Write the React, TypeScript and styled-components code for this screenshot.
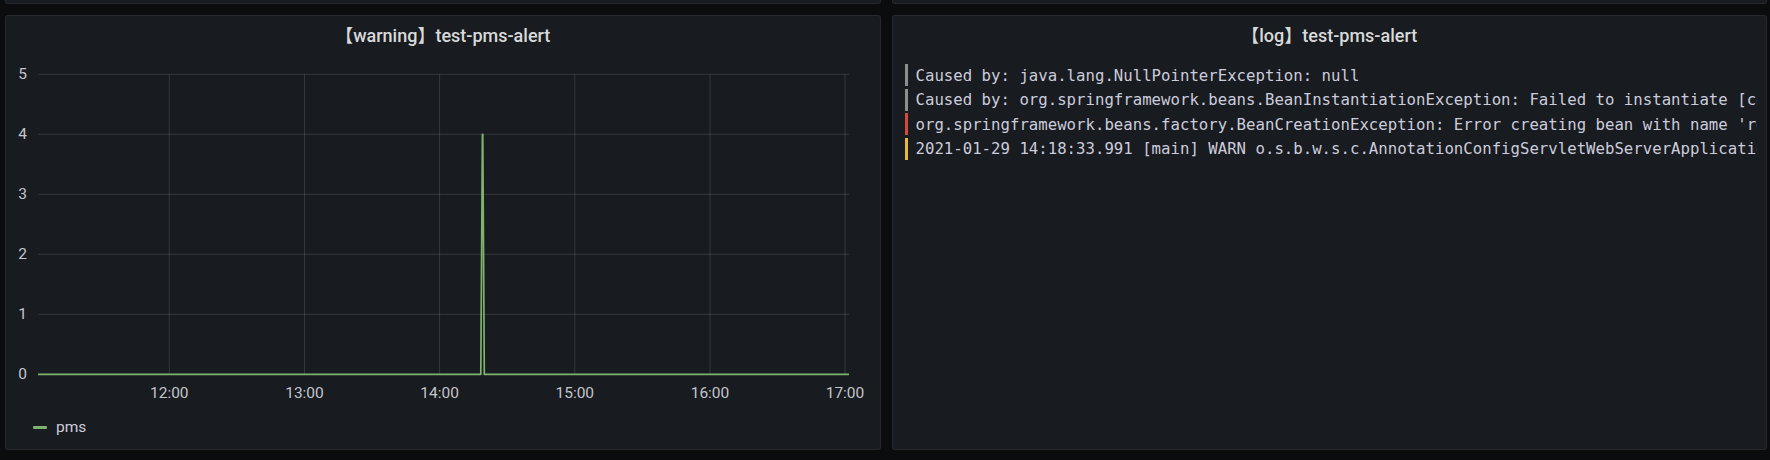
import React from "react";
import styled, { createGlobalStyle } from "styled-components";

const GlobalStyle = createGlobalStyle`
  html, body {
    margin: 0;
    padding: 0;
    background: #0b0c0e;
  }
  body {
    font-family: "Roboto", "Noto Sans CJK SC", sans-serif;
    color: #ccccdc;
  }
`;

const Page = styled.div`
  width: 1770px;
  height: 460px;
  box-sizing: border-box;
  padding: 0 3px 0 5px;
  background: #0b0c0e;
  display: flex;
  flex-direction: column;
  gap: 11px;
  overflow: hidden;
`;

const Row = styled.div`
  display: grid;
  grid-template-columns: 1fr 1fr;
  gap: 11px;
`;

const Stub = styled.div`
  height: 3px;
  background: #181b1f;
  border: 1px solid rgba(204, 204, 220, 0.07);
  border-top: none;
  border-radius: 0 0 3px 3px;
`;

const Panel = styled.section`
  height: 435px;
  box-sizing: border-box;
  background: #181b1f;
  border: 1px solid rgba(204, 204, 220, 0.08);
  border-radius: 3px;
  display: flex;
  flex-direction: column;
  overflow: hidden;
`;

const PanelHeader = styled.header`
  height: 36px;
  flex: none;
  display: flex;
  align-items: center;
  justify-content: center;
  margin-bottom: 4px;
`;

const PanelTitle = styled.h2`
  margin: 0;
  font-family: "Roboto", "Noto Sans CJK SC", sans-serif;
  font-size: 18px;
  font-weight: 500;
  color: #d8d9da;
  white-space: nowrap;
`;

const ChartBody = styled.div`
  height: 350px;
  flex: none;
  margin-top: 1px;
`;

const Legend = styled.div`
  height: 40px;
  display: flex;
  align-items: center;
  gap: 9px;
  padding-left: 27px;
`;

const LegendLine = styled.span<{ $color: string }>`
  width: 14px;
  height: 3px;
  border-radius: 1px;
  background: ${(p) => p.$color};
`;

const LegendLabel = styled.span`
  font-family: "Roboto", sans-serif;
  font-size: 15.5px;
  color: #ccccdc;
`;

const LogList = styled.div`
  padding: 7px 9px 0 12px;
  overflow: hidden;
  display: flex;
  flex-direction: column;
`;

const LogRow = styled.div`
  height: 24.5px;
  display: flex;
  align-items: center;
  gap: 8px;
  min-width: 0;
`;

const LogLevel = styled.span<{ $color: string }>`
  flex: none;
  width: 3px;
  height: 22px;
  background: ${(p) => p.$color};
`;

const LogText = styled.span`
  font-family: "DejaVu Sans Mono", "Liberation Mono", monospace;
  font-size: 15.7px;
  color: #ccccdc;
  white-space: pre;
  overflow: hidden;
  flex: 1;
  min-width: 0;
`;

const GREEN = "#7eb26d";
const GRID = "rgba(240, 250, 255, 0.13)";
const AXIS = "#c4c5cb";

const yTicks = [0, 1, 2, 3, 4, 5];
const xTicks = [
  { label: "12:00", x: 163.3 },
  { label: "13:00", x: 298.5 },
  { label: "14:00", x: 433.6 },
  { label: "15:00", x: 568.8 },
  { label: "16:00", x: 704 },
  { label: "17:00", x: 839 },
];
const X0 = 32;
const X1 = 843;
const yOf = (v: number) => 317.3 - v * 60;

function TimeSeries() {
  return (
    <svg width="874" height="350" viewBox="0 0 874 350">
      {yTicks.map((v) => (
        <g key={v}>
          <line x1={X0} x2={X1} y1={yOf(v)} y2={yOf(v)} stroke={GRID} strokeWidth={1} />
          <text
            x={21}
            y={yOf(v)}
            textAnchor="end"
            dominantBaseline="central"
            fill={AXIS}
            fontFamily="Roboto, sans-serif"
            fontSize="15.5"
          >
            {v}
          </text>
        </g>
      ))}
      {xTicks.map((t) => (
        <g key={t.label}>
          <line x1={t.x} x2={t.x} y1={yOf(5)} y2={yOf(0)} stroke={GRID} strokeWidth={1} />
          <text
            x={t.x}
            y={336}
            textAnchor="middle"
            dominantBaseline="central"
            fill={AXIS}
            fontFamily="Roboto, sans-serif"
            fontSize="15.5"
          >
            {t.label}
          </text>
        </g>
      ))}
      <polyline
        fill="none"
        stroke={GREEN}
        strokeWidth={1.7}
        strokeLinejoin="round"
        points={`${X0},${yOf(0)} 474.8,${yOf(0)} 476.4,${yOf(4)} 476.8,${yOf(4)} 478.3,${yOf(0)} ${X1},${yOf(0)}`}
      />
    </svg>
  );
}

const logs = [
  { level: "#8e8e8e", text: "Caused by: java.lang.NullPointerException: null" },
  {
    level: "#8e8e8e",
    text: "Caused by: org.springframework.beans.BeanInstantiationException: Failed to instantiate [com.example.pms.config.AlertConfig]: Constructor threw exception",
  },
  {
    level: "#d44a3a",
    text: "org.springframework.beans.factory.BeanCreationException: Error creating bean with name 'requestMappingHandlerAdapter' defined in class path resource",
  },
  {
    level: "#eab839",
    text: "2021-01-29 14:18:33.991 [main] WARN o.s.b.w.s.c.AnnotationConfigServletWebServerApplicationContext - Exception encountered during context initialization",
  },
];

export default function App() {
  return (
    <>
      <GlobalStyle />
      <Page>
        <Row>
          <Stub />
          <Stub />
        </Row>
        <Row>
          <Panel>
            <PanelHeader>
              <PanelTitle>【warning】test-pms-alert</PanelTitle>
            </PanelHeader>
            <ChartBody>
              <TimeSeries />
            </ChartBody>
            <Legend>
              <LegendLine $color={GREEN} />
              <LegendLabel>pms</LegendLabel>
            </Legend>
          </Panel>
          <Panel>
            <PanelHeader>
              <PanelTitle>【log】test-pms-alert</PanelTitle>
            </PanelHeader>
            <LogList>
              {logs.map((l, i) => (
                <LogRow key={i}>
                  <LogLevel $color={l.level} />
                  <LogText>{l.text}</LogText>
                </LogRow>
              ))}
            </LogList>
          </Panel>
        </Row>
      </Page>
    </>
  );
}
